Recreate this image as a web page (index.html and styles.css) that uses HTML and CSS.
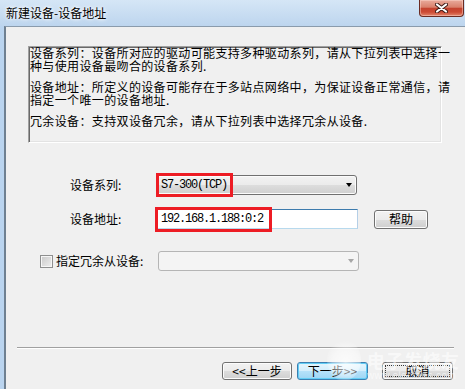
FILE: index.html
```html
<!DOCTYPE html>
<html lang="zh-CN">
<head>
    <meta charset="UTF-8">
    <title>新建设备-设备地址</title>
    <link rel="stylesheet" href="styles.css">
</head>
<body>
    <div class="window">
        <div class="titlebar">
            <span class="title">新建设备-设备地址</span>
            <div class="close">
                <svg width="13" height="10" viewBox="0 0 13 10">
                    <path d="M2 1.5 L11 8.5 M11 1.5 L2 8.5" stroke="#3b1a15" stroke-width="4" stroke-linecap="round"/>
                    <path d="M2 1.5 L11 8.5 M11 1.5 L2 8.5" stroke="#fff" stroke-width="2.2" stroke-linecap="round"/>
                </svg>
            </div>
        </div>
        <div class="client">
            <div class="desc">
                <p>设备系列：设备所对应的驱动可能支持多种驱动系列，请从下拉列表中选择一<br>种与使用设备最吻合的设备系列.</p>
                <p>设备地址：所定义的设备可能存在于多站点网络中，为保证设备正常通信，请<br>指定一个唯一的设备地址.</p>
                <p>冗余设备：支持双设备冗余，请从下拉列表中选择冗余从设备.</p>
            </div>

            <div class="row row-series">
                <span class="label">设备系列:</span>
                <div class="combo">
                    <span class="mono">S7-300(TCP)</span>
                    <span class="arrow"></span>
                    <span class="mark mark-series"></span>
                </div>
            </div>

            <div class="row row-address">
                <span class="label">设备地址:</span>
                <div class="field">
                    <span class="mono">192.168.1.188:0:2</span>
                    <span class="mark mark-address"></span>
                </div>
                <button class="btn btn-help">帮助</button>
            </div>

            <div class="row row-backup">
                <span class="check-label"><span class="checkbox"></span>指定冗余从设备:</span>
                <div class="combo combo-disabled">
                    <span></span>
                    <span class="arrow"></span>
                </div>
            </div>

            <div class="separator"></div>

            <div class="actions">
                <button class="btn">&lt;&lt;上一步</button>
                <button class="btn btn-default">下一步&gt;&gt;</button>
                <button class="btn btn-cancel">取消</button>
            </div>
        </div>

        <!-- site watermark over the bottom right corner -->
        <div class="watermark">
            <span class="wm-logo"></span>
            <div class="wm-text">
                <span class="wm-name">电子发烧友</span>
                <span class="wm-url">www.elecfans.com</span>
            </div>
        </div>
    </div>
</body>
</html>
```

FILE: styles.css
```css
body {
    margin: 0;
    width: 465px;
    height: 389px;
    overflow: hidden;
    font-family: "Noto Sans CJK SC", sans-serif;
    font-size: 12px;
    color: #000;
}

.window {
    position: relative;
    height: 389px;
    display: flex;
    flex-direction: column;
    background: linear-gradient(to right, #bad4ef 0%, #c6dcf2 45%, #b9d1eb 100%);
}

/* title bar */
.titlebar {
    height: 26px;
    flex: none;
    display: flex;
    justify-content: space-between;
    align-items: flex-start;
    background: linear-gradient(#d5e6f6, #bdd5ee);
}

.title {
    line-height: 25px;
    padding-left: 6px;
    text-shadow: 0 0 5px #fff, 0 0 3px #fff;
}

.close {
    width: 45px;
    height: 17px;
    margin-right: 1px;
    box-sizing: border-box;
    border: 1px solid #6b2b22;
    border-top: none;
    border-radius: 0 0 4px 4px;
    background: linear-gradient(#e9ab9c 0%, #d9806c 45%, #c4432f 52%, #cc4a34 75%, #e3876d 100%);
    box-shadow: inset 0 0 0 1px rgba(255, 220, 210, 0.45);
    display: flex;
    justify-content: center;
    align-items: center;
}

/* client area */
.client {
    flex: 1;
    margin-left: 4px;
    border-left: 2px solid #6f8091;
    border-top: 1px solid #8a9bac;
    background: #f0f0f0;
}

.desc {
    width: 414px;
    height: 97px;
    box-sizing: border-box;
    margin: 19px 0 0 22px;
    padding: 0 0 0 1px;
    border: 1px solid;
    border-color: #a0a0a0 #fff #fff #a0a0a0;
    box-shadow: inset 1px 1px 0 #696969, inset -1px -1px 0 #e3e3e3;
    line-height: 12.5px;
    letter-spacing: 0.36px;
    white-space: nowrap;
}

.desc p {
    margin: 0 0 9px;
}

.row {
    display: flex;
    align-items: center;
}

.row-series {
    margin-top: 32px;
    padding-left: 64px;
}

.row-address {
    margin-top: 14px;
    padding-left: 64px;
}

.row-backup {
    margin-top: 22px;
    padding-left: 34px;
}

.label {
    width: 86px;
    line-height: 16px;
}

.mono {
    font-family: "Liberation Mono", monospace;
    font-size: 12px;
    letter-spacing: -1.2px;
    line-height: 14px;
}

.combo {
    position: relative;
    width: 201px;
    height: 20px;
    box-sizing: border-box;
    border: 1px solid #707070;
    border-radius: 3px;
    background: linear-gradient(#f2f2f2 0%, #ebebeb 50%, #dddddd 51%, #cfcfcf 100%);
    box-shadow: inset 0 0 0 1px #fbfbfb;
    display: flex;
    align-items: center;
    justify-content: space-between;
    padding: 0 4px 0 4px;
}

.arrow {
    width: 0;
    height: 0;
    border-left: 3.5px solid transparent;
    border-right: 3.5px solid transparent;
    border-top: 4px solid #000;
}

.combo-disabled {
    border-color: #b5b5b5;
    background: #f4f4f4;
    box-shadow: none;
    margin-left: 0;
}

.combo-disabled .arrow {
    border-top-color: #a6a6a6;
}

.field {
    position: relative;
    width: 202px;
    height: 20px;
    box-sizing: border-box;
    border: 1px solid;
    border-color: #3d7bad #b5cfe7 #b7d9ed #a4c9e3;
    background: #fff;
    padding-left: 4px;
    display: flex;
    align-items: center;
}

/* red annotation boxes */
.mark {
    position: absolute;
    box-sizing: border-box;
    border: 3px solid #ed1c24;
}

.mark-series {
    left: -1px;
    top: -3px;
    width: 77px;
    height: 24px;
}

.mark-address {
    left: -2px;
    top: -3px;
    width: 117px;
    height: 25px;
}

.check-label {
    width: 118px;
    display: flex;
    align-items: center;
    line-height: 16px;
}

.checkbox {
    width: 13px;
    height: 13px;
    margin-right: 3px;
    box-sizing: border-box;
    border: 1px solid #8e8f8f;
    box-shadow: inset 0 0 0 1px #f6f6f6;
    background: linear-gradient(135deg, #c9c9c9, #efefef);
}

.btn {
    height: 18px;
    box-sizing: border-box;
    padding: 0;
    border: 1px solid #707070;
    border-radius: 3px;
    background: linear-gradient(#f2f2f2 0%, #ebebeb 50%, #dddddd 51%, #cfcfcf 100%);
    box-shadow: inset 0 0 0 1px #fcfcfc;
    font-family: "Noto Sans CJK SC", sans-serif;
    font-size: 12px;
    line-height: 14px;
    color: #000;
}

.btn-help {
    width: 54px;
    height: 19px;
    margin-left: 16px;
}

.separator {
    margin: 76px 0 0 11px;
    width: 437px;
    border-top: 1px solid #a0a0a0;
    border-bottom: 1px solid #fff;
}

.actions {
    margin-top: 13px;
    padding-right: 12px;
    display: flex;
    justify-content: flex-end;
}

.actions .btn {
    width: 71px;
}

.actions .btn:first-child {
    width: 70px;
}

.btn-default {
    margin-left: 5px;
    border-color: #3c7fb1;
    background: linear-gradient(#e5f5fd 0%, #d3eefc 50%, #b5e2fa 51%, #9ed6f4 100%);
    box-shadow: inset 0 0 0 1px #62cdf5;
}

.btn-cancel {
    margin-left: 14px;
    outline: 1px dotted #333;
    outline-offset: -4px;
}

/* watermark */
.watermark {
    position: absolute;
    left: 327px;
    top: 339px;
    display: flex;
    align-items: center;
    gap: 6px;
    pointer-events: none;
}

.wm-logo {
    width: 34px;
    height: 42px;
    border-radius: 50%;
    background: radial-gradient(circle at 55% 55%, rgba(255, 255, 255, 0.75) 0%, rgba(255, 255, 255, 0.45) 45%, rgba(255, 255, 255, 0) 72%);
}

.wm-text {
    display: flex;
    flex-direction: column;
    padding-top: 10px;
}

.wm-name {
    font-size: 18px;
    font-weight: bold;
    line-height: 20px;
    letter-spacing: 0.5px;
    color: rgba(255, 255, 255, 0.6);
}

.wm-url {
    font-family: "Liberation Sans", sans-serif;
    font-size: 10px;
    line-height: 11px;
    letter-spacing: 0.4px;
    color: rgba(255, 255, 255, 0.6);
}
```
